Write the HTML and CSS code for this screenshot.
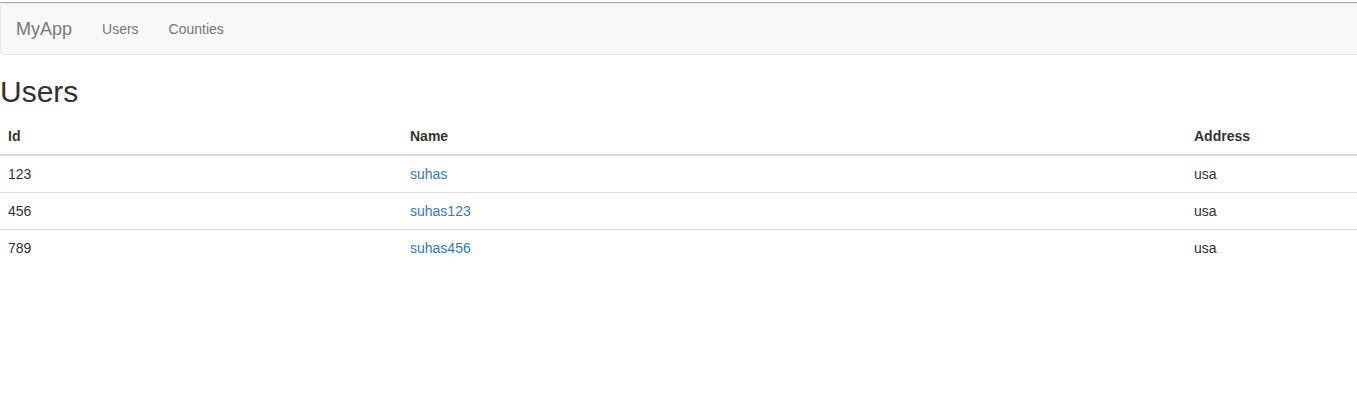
FILE: index.html
```html
<!DOCTYPE html>
<html>
<head>
<meta charset="utf-8">
<title>MyApp</title>
<link rel="stylesheet" href="styles.css">
</head>
<body>
<div class="page">
  <div class="topline"></div>
  <nav class="navbar">
    <a class="brand" href="#">MyApp</a>
    <ul class="nav">
      <li><a href="#">Users</a></li>
      <li><a href="#">Counties</a></li>
    </ul>
  </nav>
  <h2 class="title">Users</h2>
  <table class="table">
    <colgroup>
      <col class="c1"><col class="c2"><col class="c3">
    </colgroup>
    <thead>
      <tr><th>Id</th><th>Name</th><th>Address</th></tr>
    </thead>
    <tbody>
      <tr><td>123</td><td><a href="#">suhas</a></td><td>usa</td></tr>
      <tr><td>456</td><td><a href="#">suhas123</a></td><td>usa</td></tr>
      <tr><td>789</td><td><a href="#">suhas456</a></td><td>usa</td></tr>
    </tbody>
  </table>
</div>
</body>
</html>
```
FILE: styles.css
```css
* { box-sizing: border-box; }
html, body { margin: 0; padding: 0; background: #fff; }
body {
  font-family: "Liberation Sans", Arial, Helvetica, sans-serif;
  font-size: 14px;
  line-height: 1.42857143;
  color: #333;
}
.page { padding-top: 2px; }
.topline { height: 1px; background: #b0b0b0; }
a { color: #337ab7; text-decoration: none; }
.navbar {
  display: flex;
  align-items: stretch;
  min-height: 52px;
  background: #f8f8f8;
  border: 1px solid #e7e7e7;
  border-right: 0;
  border-radius: 4px 0 0 4px;
  margin-bottom: 20px;
}
.brand {
  display: block;
  padding: 15px;
  font-size: 18px;
  line-height: 20px;
  height: 50px;
  color: #777;
}
.nav {
  display: flex;
  list-style: none;
  margin: 0;
  padding: 0;
}
.nav a {
  display: block;
  padding: 15px;
  line-height: 20px;
  color: #777;
}
.title {
  margin: 20px 0 10px;
  font-size: 30px;
  font-weight: 500;
  line-height: 1.1;
}
.table {
  width: 100%;
  border-collapse: collapse;
  border-spacing: 0;
  table-layout: fixed;
}
.c1 { width: 402px; }
.c2 { width: 784px; }
.table th, .table td {
  padding: 8px;
  line-height: 20px;
  text-align: left;
  vertical-align: top;
}
.table th {
  font-weight: bold;
  border-bottom: 2px solid #ddd;
}
.table td { border-top: 1px solid #ddd; }
.table tbody tr:first-child td { border-top: 0; }
```
